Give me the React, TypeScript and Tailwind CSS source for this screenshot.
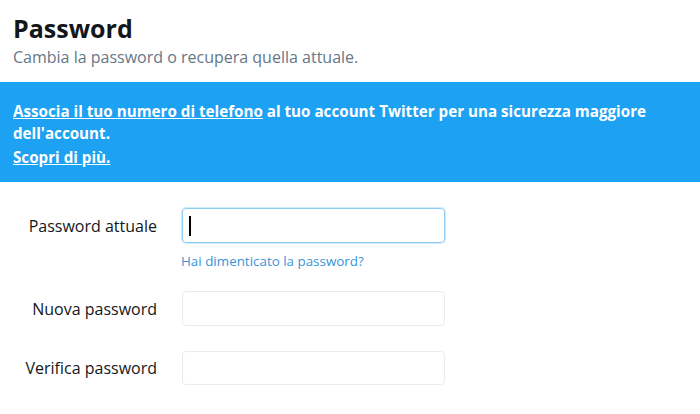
export default function App() {
  return (
    <div className="w-[700px] h-[414px] bg-white overflow-hidden font-['Open_Sans','Noto_Sans',sans-serif]">
      {/* Header */}
      <div className="px-[13px] pt-[11px] pb-[15px]">
        <h1 className="text-[25px] leading-[34px] font-bold text-[#14171a]">Password</h1>
        <p className="mt-[2px] text-[16px] leading-[20px] text-[#657786]">Cambia la password o recupera quella attuale.</p>
      </div>

      {/* Phone banner */}
      <div className="bg-[#1da1f2] h-[100px] px-[13px] pt-[18px] text-white font-bold text-[15.2px]">
        <p className="leading-[22px]">
          <a href="#" className="underline">Associa il tuo numero di telefono</a> al tuo account Twitter per una sicurezza maggiore dell'account.
        </p>
        <a href="#" className="block mt-[2px] leading-[22px] underline">Scopri di più.</a>
      </div>

      {/* Form */}
      <div className="pt-[26px] text-[#14171a] text-[16px]">
        <div className="flex items-center">
          <label className="w-[157px] text-right">Password attuale</label>
          <div className="ml-[25px] w-[263px] h-[35px] rounded-[4px] border border-[#8ecdf7] shadow-[0_0_0_1px_#d0ebfc] flex items-center pl-[6px]">
            <span className="w-[2px] h-[20px] bg-black" />
          </div>
        </div>
        <div className="ml-[181px] mt-[9px] text-[13.4px] leading-[18px] text-[#3b94d9]">Hai dimenticato la password?</div>
        <div className="flex items-center mt-[21px]">
          <label className="w-[157px] text-right">Nuova password</label>
          <div className="ml-[25px] w-[263px] h-[35px] rounded-[4px] border border-[#e6ecf0]" />
        </div>
        <div className="flex items-center mt-[25px]">
          <label className="w-[157px] text-right">Verifica password</label>
          <div className="ml-[25px] w-[263px] h-[34px] rounded-[4px] border border-[#e6ecf0]" />
        </div>
      </div>
    </div>
  );
}
